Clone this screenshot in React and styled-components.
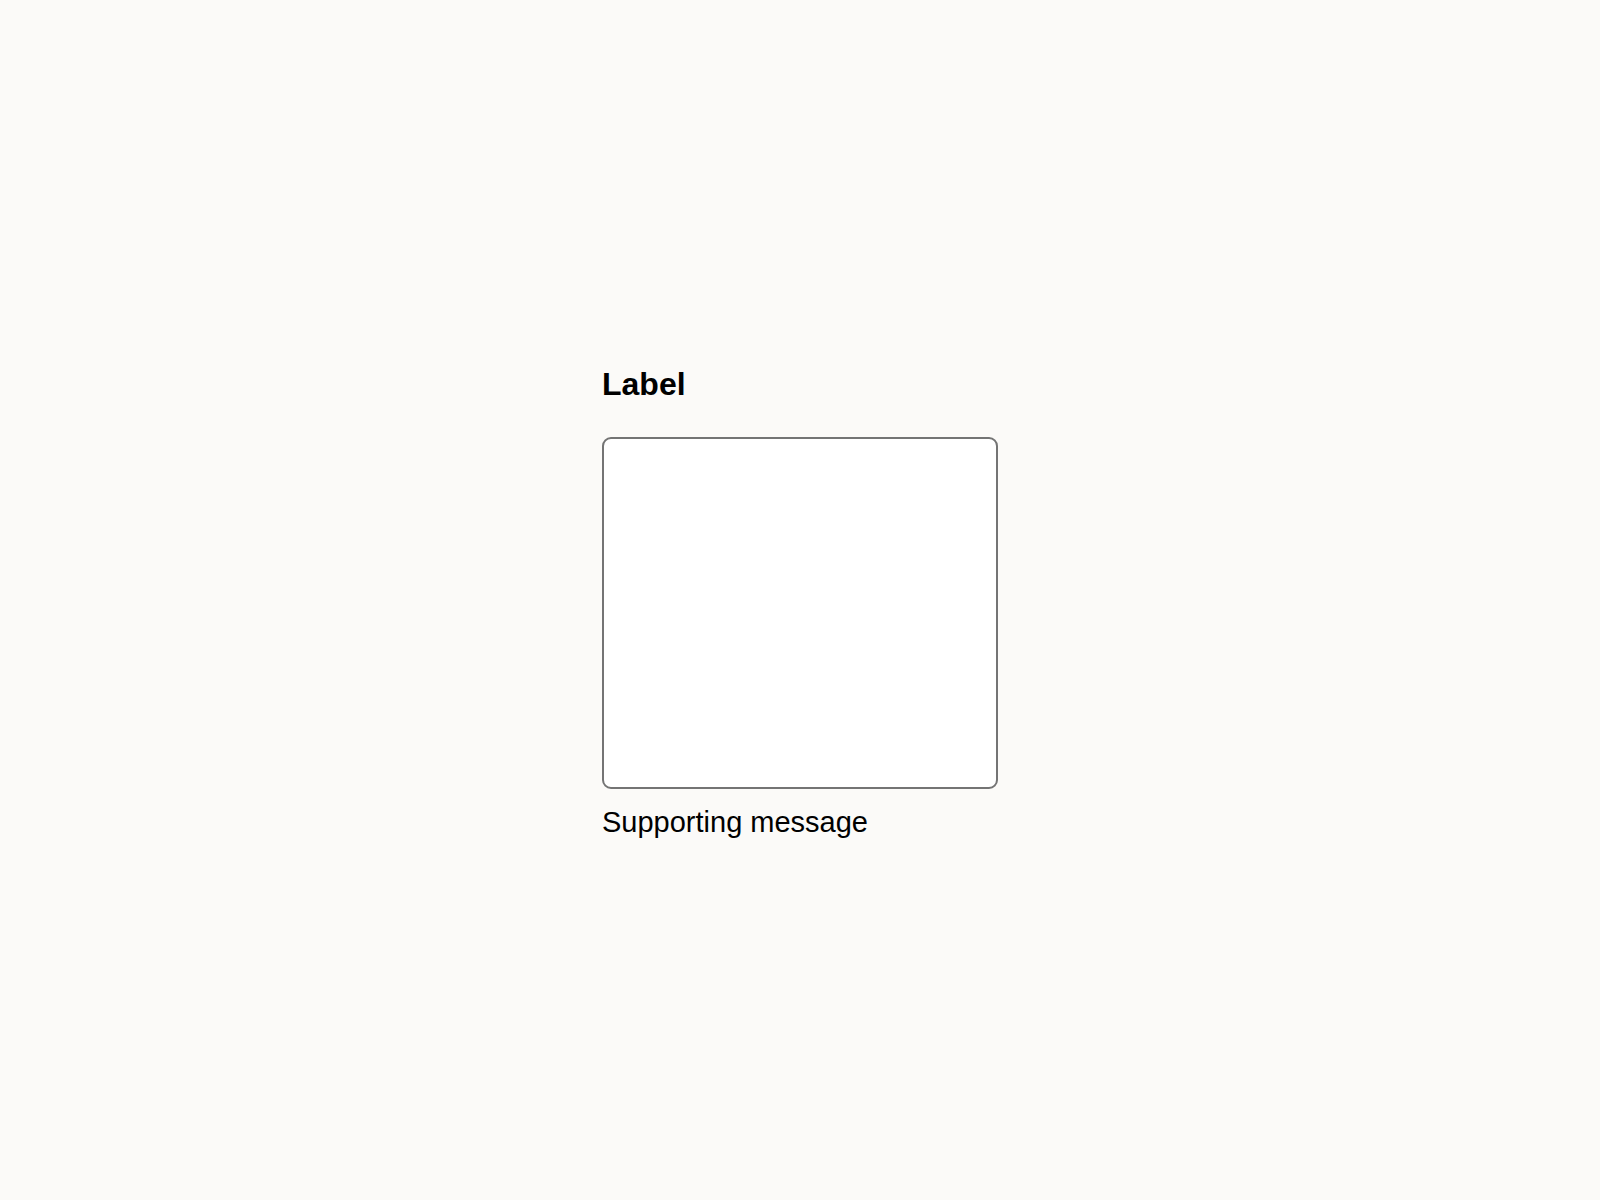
import React from 'react';
import styled, { createGlobalStyle } from 'styled-components';

const GlobalStyle = createGlobalStyle`
  html, body {
    margin: 0;
    padding: 0;
    background: #fbfaf8;
  }

  body {
    font-family: "Liberation Sans", Arial, sans-serif;
    color: #000;
  }
`;

const Page = styled.main`
  box-sizing: border-box;
  min-height: 100vh;
  padding-top: 3px;
  display: flex;
  align-items: center;
  justify-content: center;
`;

const Field = styled.div`
  display: flex;
  flex-direction: column;
  width: 396px;
`;

const Label = styled.label`
  font-size: 32px;
  line-height: 36px;
  font-weight: 700;
  margin-bottom: 35px;
`;

const TextArea = styled.textarea`
  box-sizing: border-box;
  width: 100%;
  height: 352px;
  border: 2px solid #747474;
  border-radius: 9px;
  background: #fff;
  resize: none;
  padding: 12px;
  font: inherit;
  font-size: 28px;
  outline: none;
`;

const Message = styled.p`
  margin: 17px 0 0;
  font-size: 29px;
  line-height: 32px;
`;

const App = () => (
  <>
    <GlobalStyle />
    <Page>
      <Field>
        <Label htmlFor="field">Label</Label>
        <TextArea id="field" />
        <Message>Supporting message</Message>
      </Field>
    </Page>
  </>
);

export default App;
